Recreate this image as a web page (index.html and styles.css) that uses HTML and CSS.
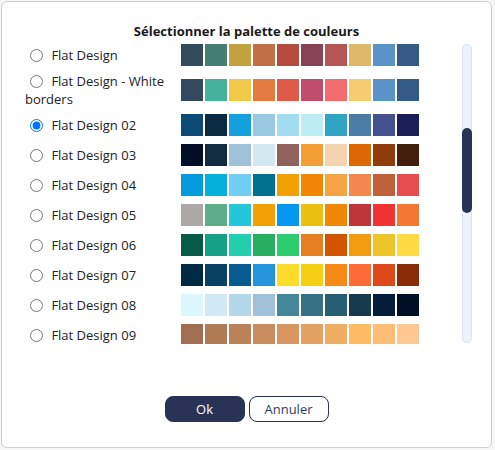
FILE: index.html
```html
<!DOCTYPE html>
<html lang="fr">
<head>
<meta charset="utf-8">
<title>Palette</title>
<link rel="stylesheet" href="styles.css">
</head>
<body>
<div class="dialog">
  <div class="title">Sélectionner la palette de couleurs</div>
  <div class="body">
    <div class="list">
      <label class="opt"><input type="radio" name="pal"> Flat Design</label>
      <div class="sw"><i style="background:#344b5c"></i><i style="background:#457f74"></i><i style="background:#c1a23e"></i><i style="background:#c07044"></i><i style="background:#b54c3f"></i><i style="background:#874255"></i><i style="background:#b65556"></i><i style="background:#dfb96b"></i><i style="background:#5a93c8"></i><i style="background:#335b85"></i></div>

      <label class="opt"><input type="radio" name="pal"> Flat Design - White borders</label>
      <div class="sw"><i style="background:#34495e"></i><i style="background:#46b29d"></i><i style="background:#f0c94a"></i><i style="background:#e37b40"></i><i style="background:#de5b49"></i><i style="background:#bf4d6a"></i><i style="background:#f26b6f"></i><i style="background:#f5cc72"></i><i style="background:#5b93c8"></i><i style="background:#335b85"></i></div>

      <label class="opt"><input type="radio" name="pal" checked> Flat Design 02</label>
      <div class="sw"><i style="background:#0b4a74"></i><i style="background:#0a2b42"></i><i style="background:#14a0dc"></i><i style="background:#98c9e0"></i><i style="background:#a3dbf1"></i><i style="background:#bdedf2"></i><i style="background:#2fa4c2"></i><i style="background:#4b7ca5"></i><i style="background:#43528e"></i><i style="background:#1c1e5a"></i></div>

      <label class="opt"><input type="radio" name="pal"> Flat Design 03</label>
      <div class="sw"><i style="background:#000e27"></i><i style="background:#112c40"></i><i style="background:#9fc1d9"></i><i style="background:#d2e9f3"></i><i style="background:#8f625e"></i><i style="background:#f49e38"></i><i style="background:#f3d4ae"></i><i style="background:#dc6705"></i><i style="background:#8f3b0a"></i><i style="background:#421f0c"></i></div>

      <label class="opt"><input type="radio" name="pal"> Flat Design 04</label>
      <div class="sw"><i style="background:#039bdb"></i><i style="background:#04b0dc"></i><i style="background:#72cdf4"></i><i style="background:#00718e"></i><i style="background:#f3a003"></i><i style="background:#f28705"></i><i style="background:#f3a444"></i><i style="background:#f3874e"></i><i style="background:#c1613b"></i><i style="background:#e84d4d"></i></div>

      <label class="opt"><input type="radio" name="pal"> Flat Design 05</label>
      <div class="sw"><i style="background:#aba8a5"></i><i style="background:#5fad88"></i><i style="background:#26c6da"></i><i style="background:#f2a003"></i><i style="background:#0598f2"></i><i style="background:#ebc012"></i><i style="background:#f28705"></i><i style="background:#bf3639"></i><i style="background:#f23333"></i><i style="background:#f27730"></i></div>

      <label class="opt"><input type="radio" name="pal"> Flat Design 06</label>
      <div class="sw"><i style="background:#065a46"></i><i style="background:#16a085"></i><i style="background:#22ceab"></i><i style="background:#27ae60"></i><i style="background:#2ecc71"></i><i style="background:#e67e22"></i><i style="background:#d35400"></i><i style="background:#f39c12"></i><i style="background:#edc52a"></i><i style="background:#ffda44"></i></div>

      <label class="opt"><input type="radio" name="pal"> Flat Design 07</label>
      <div class="sw"><i style="background:#002944"></i><i style="background:#084161"></i><i style="background:#095a91"></i><i style="background:#2494dd"></i><i style="background:#ffdb2b"></i><i style="background:#f4cf12"></i><i style="background:#f68a15"></i><i style="background:#ff6a37"></i><i style="background:#dd4a1a"></i><i style="background:#8a2b08"></i></div>

      <label class="opt"><input type="radio" name="pal"> Flat Design 08</label>
      <div class="sw"><i style="background:#dcf8fd"></i><i style="background:#d1e9f4"></i><i style="background:#b5d7ea"></i><i style="background:#a0c1d9"></i><i style="background:#438799"></i><i style="background:#367186"></i><i style="background:#285e74"></i><i style="background:#173a4f"></i><i style="background:#051c3b"></i><i style="background:#000f23"></i></div>

      <label class="opt"><input type="radio" name="pal"> Flat Design 09</label>
      <div class="sw"><i style="background:#a06f52"></i><i style="background:#af7a56"></i><i style="background:#bb825a"></i><i style="background:#c98c5e"></i><i style="background:#d99661"></i><i style="background:#e3a263"></i><i style="background:#f0ad64"></i><i style="background:#fdbb66"></i><i style="background:#febd77"></i><i style="background:#fec893"></i></div>
    </div>
    <div class="track"><div class="thumb"></div></div>
  </div>
  <div class="actions">
    <button class="btn ok">Ok</button>
    <button class="btn cancel">Annuler</button>
  </div>
</div>
</body>
</html>
```

FILE: styles.css
```css
html, body {
  margin: 0;
  padding: 0;
  background: #f6f6f6;
  overflow: hidden;
}

body {
  font-family: "Open Sans", "Liberation Sans", sans-serif;
  font-size: 13px;
  color: #222;
}

.dialog {
  box-sizing: border-box;
  width: 491px;
  height: 447px;
  margin: 1px 0 0 1px;
  background: #fff;
  border: 1px solid #cfcfcf;
  border-radius: 6px;
  display: flex;
  flex-direction: column;
  padding: 20px 0 25px 0;
}

.title {
  text-align: center;
  font-weight: 700;
  font-size: 13px;
  line-height: 18px;
  color: #1a1a1a;
}

.body {
  display: flex;
  height: 304px;
  overflow: hidden;
  padding-left: 23px;
}

.list {
  flex: 1;
  display: grid;
  grid-template-columns: 156px auto;
  grid-auto-rows: auto;
  align-items: center;
  align-content: start;
}

.opt {
  display: block;
  line-height: 18px;
  padding: 2px 0;
  color: #222;
}

.opt input {
  width: 13px;
  height: 13px;
  margin: 0 5px 0 5px;
  vertical-align: -2px;
}

.sw {
  display: flex;
  gap: 2px;
  padding: 4px 0;
}

.sw i {
  display: block;
  width: 22px;
  height: 22px;
}

.track {
  width: 10px;
  height: 299px;
  margin: 4px 19px 0 0;
  background: #eef3fb;
  box-shadow: inset 0 0 0 1px #dce4f0;
  border-radius: 5px;
  display: flex;
  flex-direction: column;
}

.thumb {
  margin-top: 84px;
  height: 85px;
  background: #283355;
  border-radius: 5px;
}

.actions {
  margin-top: 52px;
  display: flex;
  justify-content: center;
  gap: 4px;
}

.btn {
  box-sizing: border-box;
  width: 80px;
  height: 26px;
  border-radius: 8px;
  font-family: "Open Sans", "Liberation Sans", sans-serif;
  font-size: 13px;
  padding: 0;
  cursor: pointer;
}

.ok {
  background: #293356;
  color: #fff;
  border: 1px solid #293356;
}

.cancel {
  background: #fff;
  color: #2f3a5c;
  border: 1px solid #293356;
}
```
